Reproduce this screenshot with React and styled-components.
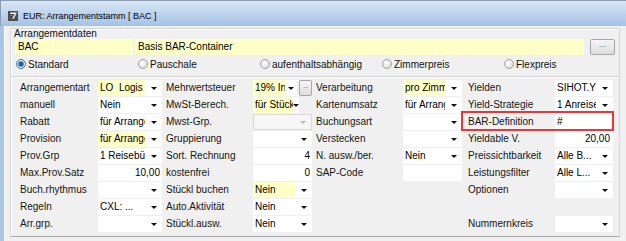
import React from 'react';
import styled, { createGlobalStyle } from 'styled-components';

const Global = createGlobalStyle`
  html, body { margin: 0; padding: 0; background: #f0f0f0; }
  body { font-family: "Liberation Sans", Arial, sans-serif; font-size: 10px; color: #000; }
  * { box-sizing: border-box; }
`;

const Window = styled.div`
  width: 626px;
  height: 241px;
  overflow: hidden;
  display: flex;
  flex-direction: column;
  background: #f0f0f0;
  border-top: 1px solid #8a9bb2;
`;

const TitleBar = styled.div`
  height: 25px;
  flex: none;
  display: flex;
  align-items: center;
  gap: 5px;
  padding: 4px 0 0 7px;
  background: linear-gradient(#d9e6f5, #a4c2e5);
  border-left: 1px solid #8a9bb2;
  font-size: 9px;
  color: #000;
`;

const Client = styled.div`
  flex: 1;
  display: flex;
  flex-direction: column;
  border-left: 4px solid #a9c6e8;
  box-shadow: inset 1px 0 0 #fff;
  padding: 2px 0 0 6px;
  background: #f0f0f0;
`;

const Panel = styled.div`
  width: 610px;
  height: 209px;
  flex: none;
  border: 1px solid #d6d6d6;
  border-bottom-color: #a9a9a9;
  box-shadow: inset 1px 1px 0 #fff;
  display: flex;
  flex-direction: column;
`;

const Caption = styled.div`
  line-height: 10px;
  height: 10px;
  padding-left: 3px;
  color: #111;
`;

const TopFields = styled.div`
  display: flex;
  height: 16px;
  padding-left: 4px;
  gap: 2px;
`;

const YellowBox = styled.div`
  width: ${p => p.$w}px;
  height: 16px;
  background: #ffffc8;
  line-height: 16px;
  padding-left: 3px;
  white-space: nowrap;
  overflow: hidden;
`;

const DotsButton = styled.div`
  width: ${p => p.$w}px;
  height: ${p => p.$h}px;
  margin-left: ${p => p.$ml || 0}px;
  border: 1px solid #a6a6a6;
  border-radius: 2px;
  background: linear-gradient(#f6f6f6, #dcdcdc);
  color: #7a7a7a;
  font-size: 8px;
  line-height: ${p => p.$h - 6}px;
  text-align: center;
  letter-spacing: -0.5px;
  flex: none;
`;

const RadioRow = styled.div`
  height: 18px;
  display: grid;
  grid-template-columns: repeat(5, 122px);
  padding-left: 5px;
  align-items: center;
`;

const RadioItem = styled.label`
  display: flex;
  align-items: center;
  gap: 2px;
  color: #111;
`;

const RadioDot = styled.span`
  width: 10px;
  height: 10px;
  border-radius: 50%;
  border: 1px solid ${p => (p.$on ? '#3d6f9e' : '#a2a2a2')};
  background: ${p =>
    p.$on
      ? 'radial-gradient(circle, #1f5fa8 0 2px, #6fa2d6 2.5px 3px, #eef4fa 3.5px)'
      : 'radial-gradient(circle at 40% 40%, #ffffff, #d4d4d4)'};
  flex: none;
`;

const Separator = styled.div`
  margin-top: 3px;
  height: 2px;
  border-top: 1px solid #d4d4d4;
  border-bottom: 1px solid #ffffff;
`;

const Grid = styled.div`
  position: relative;
  margin-top: 2px;
  padding-left: 9px;
  display: grid;
  grid-template-columns: 78px 64px 91px 59px 91px 59px 93px 58px;
  grid-auto-rows: 16px;
  row-gap: 1px;
`;

const Label = styled.div`
  padding-left: ${p => p.$pl}px;
  line-height: 16px;
  white-space: nowrap;
  color: #151515;
  grid-column: ${p => p.$col};
  grid-row: ${p => p.$row};
`;

const FieldCell = styled.div`
  display: flex;
  gap: 2px;
  grid-column: ${p => p.$col};
  grid-row: ${p => p.$row};
`;

const Combo = styled.div`
  width: ${p => p.$w}px;
  height: 16px;
  display: flex;
  background: ${p => (p.$dis ? '#f6f6f6' : '#fff')};
  border: ${p => (p.$dis ? '1px solid #dadada' : 'none')};
  flex: none;
`;

const ComboText = styled.div`
  flex: 1;
  min-width: 0;
  background: ${p => (p.$yellow ? '#ffffc8' : 'transparent')};
  line-height: 16px;
  padding-left: 2px;
  white-space: pre;
  overflow: hidden;
`;

const ComboArrow = styled.div`
  width: ${p => p.$aw}px;
  flex: none;
  display: flex;
  align-items: center;
  justify-content: center;
  &::after {
    content: '';
    width: 0;
    height: 0;
    border-left: 3px solid transparent;
    border-right: 3px solid transparent;
    border-top: 3px solid ${p => (p.$dis ? '#b8b8b8' : '#111')};
  }
`;

const TextBox = styled.div`
  width: 100%;
  height: 16px;
  background: #fff;
  line-height: 16px;
  padding: 0 ${p => p.$pr}px 0 2px;
  text-align: ${p => (p.$right ? 'right' : 'left')};
  white-space: nowrap;
  overflow: hidden;
`;

const RedMark = styled.div`
  position: absolute;
  grid-column: 7 / 9;
  grid-row: 3 / 4;
  top: -3px;
  bottom: -1px;
  left: -1px;
  right: -1px;
  border: 2px solid #e23a3c;
  pointer-events: none;
`;

const TitleIcon = () => (
  <svg width="10" height="10" viewBox="0 0 11 11">
    <rect x="0" y="0" width="11" height="11" fill="#4d4d4d" />
    <path d="M2.5 2.5 H8.5 L5.5 8.5" fill="none" stroke="#f2f2f2" strokeWidth="1.6" />
    <path d="M2.5 5 L4.5 5" stroke="#e05050" strokeWidth="1.2" />
  </svg>
);

const C = (v, o = {}) => ({ t: 'combo', v, ...o });
const T = (v, o = {}) => ({ t: 'text', v, ...o });

const rows = [
  [['Arrangementart', C('LO  Logis', { y: true })], ['Mehrwertsteuer', C('19% Inland', { y: true, w: 44, aw: 12, dots: true })], ['Verarbeitung', C('pro Zimmerpreis', { y: true })], ['Yielden', C('SIHOT.YIELD')]],
  [['manuell', C('Nein')], ['MwSt-Berech.', C('für Stück', { y: true, w: 46, aw: 6 })], ['Kartenumsatz', C('für Arrangement')], ['Yield-Strategie', C('1 Anreise')]],
  [['Rabatt', C('für Arrangement')], ['Mwst-Grp.', C('', { dis: true })], ['Buchungsart', C('')], ['BAR-Definition', T('#')]],
  [['Provision', C('für Arrangement', { y: true })], ['Gruppierung', C('')], ['Verstecken', C('')], ['Yieldable V.', T('20,00', { right: true, pr: 3 })]],
  [['Prov.Grp', C('1 Reisebüro')], ['Sort. Rechnung', T('4', { right: true })], ['N. ausw./ber.', C('Nein')], ['Preissichtbarkeit', C('Alle B...')]],
  [['Max.Prov.Satz', T('10,00', { right: true })], ['kostenfrei', T('0', { right: true })], ['SAP-Code', T('')], ['Leistungsfilter', C('Alle L...')]],
  [['Buch.rhythmus', C('')], ['Stückl buchen', C('Nein', { y: true })], null, ['Optionen', C('')]],
  [['Regeln', C('CXL: ...')], ['Auto.Aktivität', C('Nein')], null, null],
  [['Arr.grp.', C('')], ['Stückl.ausw.', C('Nein')], null, ['Nummernkreis', C('')]],
];

const colW = [64, 59, 59, 58];
const labelPad = [0, 4, 4, 6];

const Field = ({ f, width }) => {
  if (f.t === 'text') {
    return <TextBox $right={f.right} $pr={f.pr ?? 2}>{f.v}</TextBox>;
  }
  const w = f.w || width;
  return (
    <>
      <Combo $w={w} $dis={f.dis}>
        <ComboText $yellow={f.y}>{f.v}</ComboText>
        <ComboArrow $aw={f.aw || 17} $dis={f.dis} />
      </Combo>
      {f.dots && <DotsButton $w={13} $h={16}>...</DotsButton>}
    </>
  );
};

const radios = ['Standard', 'Pauschale', 'aufenthaltsabhängig', 'Zimmerpreis', 'Flexpreis'];

export default function App() {
  return (
    <>
      <Global />
      <Window>
        <TitleBar>
          <TitleIcon />
          <span>EUR: Arrangementstamm [ BAC ]</span>
        </TitleBar>
        <Client>
          <Panel>
            <Caption>Arrangementdaten</Caption>
            <TopFields>
              <YellowBox $w={118}>BAC</YellowBox>
              <YellowBox $w={449}>Basis BAR-Container</YellowBox>
              <DotsButton $w={25} $h={16} $ml={4}>....</DotsButton>
            </TopFields>
            <RadioRow>
              {radios.map((r, i) => (
                <RadioItem key={r}>
                  <RadioDot $on={i === 0} />
                  {r}
                </RadioItem>
              ))}
            </RadioRow>
            <Separator />
            <Grid>
              {rows.map((row, ri) =>
                row.map((pair, ci) =>
                  pair ? (
                    <React.Fragment key={`${ri}-${ci}`}>
                      <Label $pl={labelPad[ci]} $col={ci * 2 + 1} $row={ri + 1}>{pair[0]}</Label>
                      <FieldCell $col={ci * 2 + 2} $row={ri + 1}>
                        <Field f={pair[1]} width={colW[ci]} />
                      </FieldCell>
                    </React.Fragment>
                  ) : null
                )
              )}
              <RedMark />
            </Grid>
          </Panel>
        </Client>
      </Window>
    </>
  );
}
